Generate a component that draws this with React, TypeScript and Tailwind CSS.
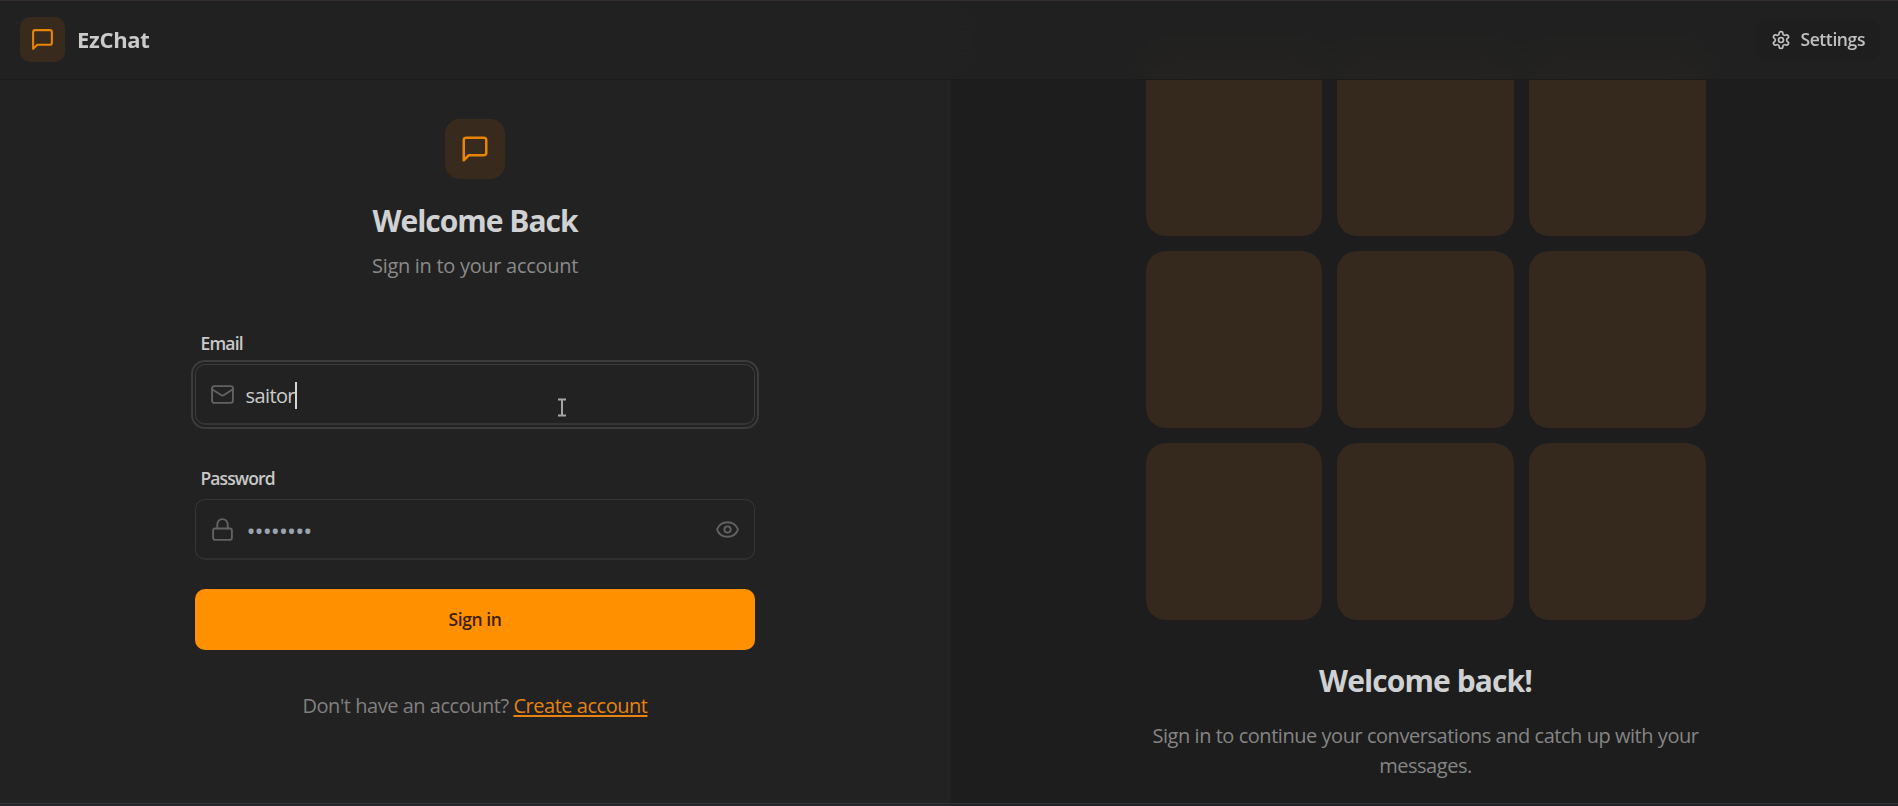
import type { ReactNode } from "react";
import { Eye } from "lucide-react";

const tiles = Array.from({ length: 9 }, (_, i) => i);

function Icon({ className, strokeWidth = 2, children }: { className: string; strokeWidth?: number; children: ReactNode }) {
  return (
    <svg
      className={className}
      viewBox="0 0 24 24"
      fill="none"
      stroke="currentColor"
      strokeWidth={strokeWidth}
      strokeLinecap="round"
      strokeLinejoin="round"
    >
      {children}
    </svg>
  );
}

function ChatIcon({ className }: { className: string }) {
  return (
    <Icon className={className}>
      <path d="M21 15a2 2 0 0 1-2 2H7l-4 4V5a2 2 0 0 1 2-2h14a2 2 0 0 1 2 2z" />
    </Icon>
  );
}

function Header() {
  return (
    <header className="absolute inset-x-0 top-0 z-10 flex h-20 items-center justify-between border-t border-b border-t-[#332c2c] border-b-[#1b1b1b] bg-[#222222]/80 pr-[18px] pb-px pl-5 backdrop-blur-lg">
      <div className="flex items-center gap-3">
        <div className="flex size-[45px] items-center justify-center rounded-[10px] bg-[#382b1d]">
          <ChatIcon className="size-[25px] text-[#e88504]" />
        </div>
        <h1 className="pb-[2px] text-[22px] leading-none font-bold tracking-[-0.3px] text-[#cbcbcb]">EzChat</h1>
      </div>
      <button className="flex h-10 items-center gap-[9px] rounded-[10px] bg-[#1e1e1e] px-[15px] text-[17.5px] font-semibold tracking-[-0.4px] text-[#c0c0c0]">
        <Icon className="size-5">
          <path d="M12.22 2h-.44a2 2 0 0 0-2 2v.18a2 2 0 0 1-1 1.73l-.43.25a2 2 0 0 1-2 0l-.15-.08a2 2 0 0 0-2.73.73l-.22.38a2 2 0 0 0 .73 2.73l.15.1a2 2 0 0 1 1 1.72v.51a2 2 0 0 1-1 1.74l-.15.09a2 2 0 0 0-.73 2.73l.22.38a2 2 0 0 0 2.73.73l.15-.08a2 2 0 0 1 2 0l.43.25a2 2 0 0 1 1 1.73V20a2 2 0 0 0 2 2h.44a2 2 0 0 0 2-2v-.18a2 2 0 0 1 1-1.73l.43-.25a2 2 0 0 1 2 0l.15.08a2 2 0 0 0 2.73-.73l.22-.39a2 2 0 0 0-.73-2.73l-.15-.08a2 2 0 0 1-1-1.74v-.5a2 2 0 0 1 1-1.74l.15-.09a2 2 0 0 0 .73-2.73l-.22-.38a2 2 0 0 0-2.73-.73l-.15.08a2 2 0 0 1-2 0l-.43-.25a2 2 0 0 1-1-1.73V4a2 2 0 0 0-2-2z" />
          <circle cx="12" cy="12" r="3" />
        </Icon>
        <span>Settings</span>
      </button>
    </header>
  );
}

function SignInForm() {
  return (
    <section className="flex w-[951px] flex-col items-center bg-[#222222] pt-[119px] pr-[2px]">
      <div className="flex size-[60px] items-center justify-center rounded-[15px] bg-[#382b1d]">
        <ChatIcon className="size-[30px] text-[#e88504]" />
      </div>
      <h2 className="mt-[22px] pl-px text-[30px] leading-[40px] font-bold tracking-[-1px] text-[#d0d1d3]">Welcome Back</h2>
      <p className="mt-[10px] pl-px text-[20px] leading-[30px] tracking-[-0.3px] text-[#8a8a8a]">Sign in to your account</p>

      <form className="mt-[50px] flex w-[560px] flex-col">
        <label className="pl-[6px] text-[17.5px] leading-[25px] font-semibold tracking-[-0.8px] text-[#c8c8c8]">Email</label>
        <div className="mt-2 flex h-[61px] items-center rounded-[10px] border border-b-2 border-[#3c3c3c] border-b-[#343434] pl-[14px] outline-2 outline-offset-2 outline-[#3c3c3c]">
          <Icon className="size-[25px] text-[#626262]" strokeWidth={1.8}>
            <rect width="20" height="16" x="2" y="4" rx="2" />
            <path d="m22 7-8.97 5.7a1.94 1.94 0 0 1-2.06 0L2 7" />
          </Icon>
          <span className="ml-[11px] pt-[3px] text-[20px] tracking-[-0.6px] text-[#cccccc]">saitor</span>
          <span className="mt-[2px] h-[27px] w-[2px] bg-[#d6d6d6]" />
        </div>
        <label className="mt-[41px] pl-[6px] text-[17.5px] leading-[25px] font-semibold tracking-[-0.9px] text-[#c8c8c8]">Password</label>
        <div className="mt-2 flex h-[61px] items-center rounded-[10px] border border-b-2 border-[#363636] border-b-[#2f2f2f] pr-[14px] pl-[14px]">
          <Icon className="size-[25px] text-[#626262]" strokeWidth={1.8}>
            <rect width="18" height="11" x="3" y="11" rx="2" ry="2" />
            <path d="M7 11V7a5 5 0 0 1 10 0v4" />
          </Icon>
          <span className="ml-[12px] flex-1 pt-[4px] text-[24px] leading-[30px] tracking-[-0.9px] text-[#9ba3ae]">••••••••</span>
          <Eye className="size-[25px] text-[#626262]" strokeWidth={1.8} />
        </div>
        <button type="button" className="mt-[29px] h-[61px] rounded-[10px] bg-[#ff9000] pl-px text-[17.5px] font-semibold tracking-[-0.4px] text-[#3f2006]">
          Sign in
        </button>
      </form>

      <p className="mt-[41px] pl-px text-[20px] leading-[30px] tracking-[-0.47px] text-[#808080]">
        Don't have an account?{" "}
        <a className="text-[#e88310] underline decoration-2 underline-offset-2">Create account</a>
      </p>
    </section>
  );
}

function WelcomePanel() {
  return (
    <section className="flex flex-1 flex-col items-center bg-[#1d1d1d] pt-[59.5px] pl-[2px]">
      <div className="grid w-[560px] grid-cols-3 gap-[15px]">
        {tiles.map((tile) => (
          <div key={tile} className="aspect-square rounded-[20px] bg-[#35281c]" />
        ))}
      </div>
      <h2 className="mt-[41.5px] text-[30px] leading-[40px] font-bold tracking-[-0.9px] text-[#d0d1d3]">Welcome back!</h2>
      <p className="mt-[20px] w-[560px] text-center text-[20px] leading-[30px] tracking-[-0.46px] text-[#858585]">
        Sign in to continue your conversations and catch up with your messages.
      </p>
    </section>
  );
}

export default function App() {
  return (
    <div className="relative flex h-[806px] w-full flex-col overflow-hidden bg-[#1d1d1d] font-['Open_Sans','Noto_Sans',sans-serif]">
      <Header />
      <main className="flex h-[803px]">
        <SignInForm />
        <WelcomePanel />
      </main>
      <div className="h-[3px] border-t border-[#33343a] bg-[#222328]" />
      <svg className="absolute top-[398px] left-[557px]" width="10" height="19" viewBox="0 0 10 19" fill="none" stroke="#a5a5a5" strokeWidth="2">
        <path d="M1 1.5H9M5 1.5V17.5M1 17.5H9" />
      </svg>
    </div>
  );
}
